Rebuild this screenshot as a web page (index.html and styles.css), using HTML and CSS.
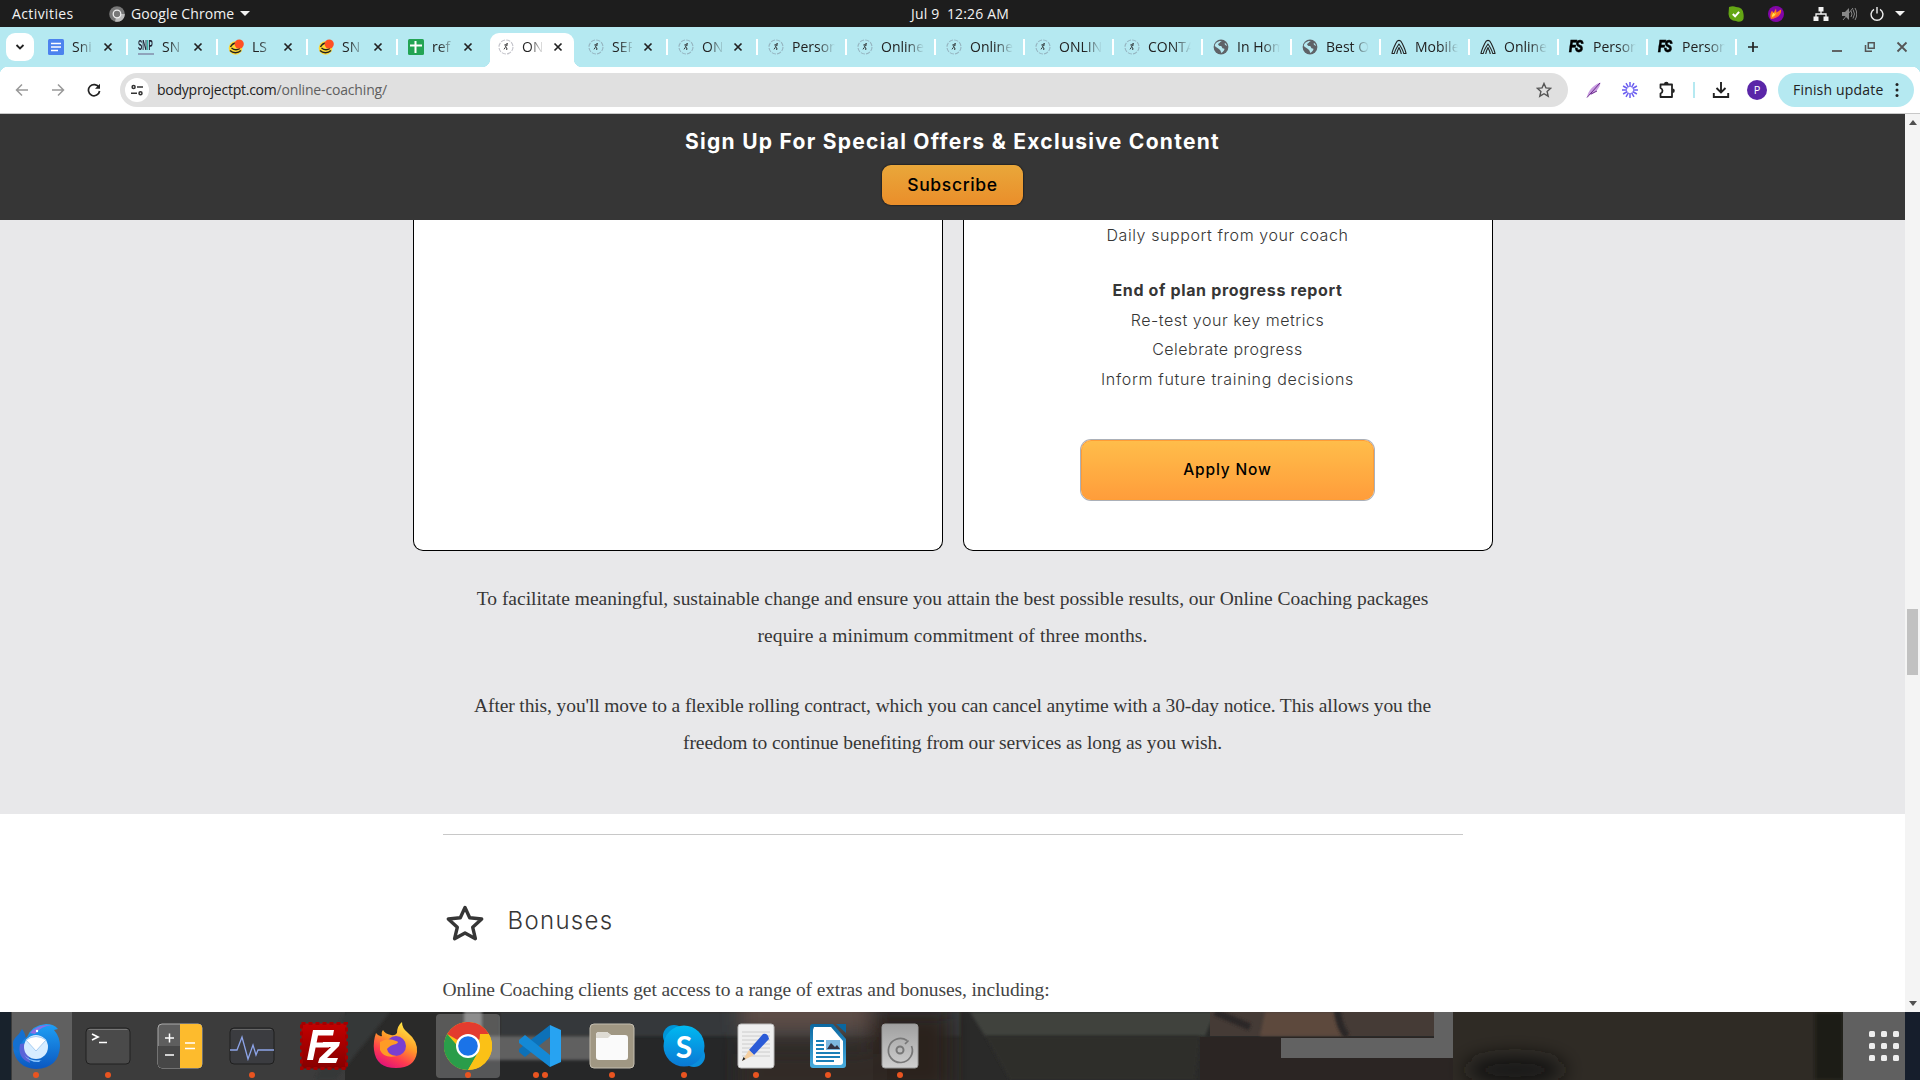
FILE: index.html
```html
<!DOCTYPE html>
<html lang="en">
<head>
<meta charset="utf-8">
<title>Online Coaching</title>
<link rel="stylesheet" href="styles.css">
</head>
<body>
<svg class="defs" width="0" height="0">
  <defs>
    <symbol id="close" viewBox="0 0 10 10"><path d="M1.500 1.500l7 7M8.500 1.500l-7 7" stroke="#222" stroke-width="1.700" fill="none"/></symbol>
    <symbol id="runner" viewBox="0 0 16 16"><circle cx="8" cy="8" r="7" fill="none" stroke="#667" stroke-opacity=".4" stroke-width="1.100" stroke-dasharray="4.300 1.200"/><path d="M6.300 6l2-.3 1 1.200M8.300 5.800L7.600 8l1.300 1-.2 2M7.400 8.300L6 10.300" stroke="#222" stroke-width=".9" fill="none"/><circle cx="9.100" cy="4.900" r=".8" fill="#222"/></symbol>
    <symbol id="globe" viewBox="0 0 16 16"><circle cx="8" cy="8" r="7.400" fill="#5f6368"/><path d="M9 2c-2 .5-2 2-3.300 2.500C4.500 5 5.500 7 7.500 7c2 0 1 2.500 3 2.500S11 12 8.500 14c-.8-1-.5-2-1.500-3S3 8 1.800 7C2 4 5 1.500 9 2zM12 4c-1 1 0 2 2 3-.2-1.500-1-2.500-2-3z" fill="#b5e9f1"/></symbol>
    <symbol id="arch" viewBox="0 0 16 16"><path d="M1 14.500C1.500 11 3.300 7.500 5 4 6.500.5 9.500.5 11 4c1.700 3.500 3.500 7 4 10.500h-2.300C12 11 10 8 8 5 6 8 4 11 3.300 14.500zM5.700 15c.2-2.500 1-4 2.300-6.500 1.300 2.500 2.100 4 2.300 6.500" stroke="#222" stroke-width="1.100" fill="none" stroke-linejoin="round"/></symbol>
    <symbol id="snap" viewBox="0 0 16 16"><circle cx="7.500" cy="9" r="6.800" fill="#fdd835"/><path d="M2.500 8c1.500-3 3-4 6-4M2 11.500c3 3 8 3 11 0M3.500 9c2.500 2 6 2 8.500.5" stroke="#222" stroke-width="1.400" fill="none"/><circle cx="11.200" cy="5" r="4.600" fill="#ff5023"/></symbol>
    <linearGradient id="gb" x1="0" y1="0" x2="0" y2="1"><stop offset="0" stop-color="#1ea0f5"/><stop offset="1" stop-color="#0b57c0"/></linearGradient>
    <linearGradient id="gf" x1=".8" y1="0" x2=".3" y2="1"><stop offset="0" stop-color="#fff34a"/><stop offset=".45" stop-color="#ff9a28"/><stop offset=".75" stop-color="#ff3b4f"/><stop offset="1" stop-color="#e0127a"/></linearGradient>
    <linearGradient id="gs" x1="0" y1="0" x2="0" y2="1"><stop offset="0" stop-color="#00b9f1"/><stop offset="1" stop-color="#0a78d4"/></linearGradient>
    <linearGradient id="gr" x1="0" y1="0" x2="0" y2="1"><stop offset="0" stop-color="#c40000"/><stop offset="1" stop-color="#860000"/></linearGradient>
    <linearGradient id="gd" x1="0" y1="0" x2="0" y2="1"><stop offset="0" stop-color="#a0a0a0"/><stop offset="1" stop-color="#cfcfcf"/></linearGradient>
    <linearGradient id="gw" x1="0" y1="0" x2="0" y2="1"><stop offset="0" stop-color="#0a67a0"/><stop offset="1" stop-color="#49aee0"/></linearGradient>
    <filter id="b2"><feGaussianBlur stdDeviation="1.500"/></filter>
    <filter id="b12" x="-100%" y="-200%" width="300%" height="500%"><feGaussianBlur stdDeviation="10"/></filter>
  </defs>
</svg>

<header class="topbar">
  <div class="topleft">
    <span class="t act">Activities</span>
    <svg class="chromeapp" width="16" height="16" viewBox="0 0 16 16"><circle cx="8" cy="8" r="7.800" fill="#777"/><path d="M8 8h7.800A7.800 7.800 0 0 1 6 15.500z" fill="#bbb"/><circle cx="8" cy="8" r="3.800" fill="#777" stroke="#eee" stroke-width="1.300"/></svg>
    <span class="t gc">Google Chrome</span>
    <i class="caret"></i>
  </div>
  <span class="t clock">Jul 9&nbsp; 12:26 AM</span>
  <div class="tray">
    <svg width="16" height="16" viewBox="0 0 16 16"><path d="M1 1q4-1.500 7 0 7 0 7.500 7 1 7-3 7.500-3 .5-4.500-.500Q1 15 .5 8z" fill="#64a614"/><path d="M4.800 8l2.300 2.300 4-4.500" stroke="#fff" stroke-width="2" fill="none"/></svg>
    <svg class="purple" width="16" height="16" viewBox="0 0 16 16"><circle cx="8" cy="8" r="8" fill="#8205a8"/><path d="M3 13C1.500 10 2.500 7 4 4.500L5.500 7 8 2.500l.5 4 4.500-3C14 9 9 12 3 13z" fill="#ff7a1a"/><path d="M7 11c2-1 4-3 5-6-1 5-4 7-8 8z" fill="#ff2a6a"/><path d="M4 11c-.500-2 1-3 1.500-4.500L6.500 8 7.500 6.500c.5 2-1 4-3.500 4.500z" fill="#ffe14a"/></svg>
    <svg width="16" height="14" viewBox="0 0 16 14"><path d="M5.500 0h5v4.500h-5zM.5 9.500h5V14h-5zM10.500 9.500h5V14h-5z" fill="#f2f2f2"/><path d="M8 4v3M3 10V7h10v3" stroke="#f2f2f2" stroke-width="1.300" fill="none"/></svg>
    <svg class="vol" width="16" height="14" viewBox="0 0 16 14"><path d="M1 5h3l4-4v12L4 9H1z" fill="#888"/><path d="M10 4q2 3 0 6M12 2.500q3 4.500 0 9M14 1q3.500 6 0 12M2 13L12 1" stroke="#888" fill="none"/></svg>
    <svg class="pow" width="14" height="14" viewBox="0 0 14 14"><path d="M4 2.300a5.900 5.900 0 1 0 6 0M7 0v6.500" stroke="#eee" stroke-width="1.400" fill="none"/></svg>
    <i class="caret"></i>
  </div>
</header>

<nav class="tabs">
  <div class="tabsearch"><svg width="10" height="8" viewBox="0 0 10 8"><path d="M1.500 2l3.500 3.500L8.500 2" stroke="#222" stroke-width="1.800" fill="none"/></svg></div>
  <div class="tab"><svg class="fav" viewBox="0 0 16 16"><rect width="16" height="16" rx="1.500" fill="#4c82ee"/><path d="M3 4.500h10M3 8h10M3 11.500h7" stroke="#fff" stroke-width="1.500"/></svg><span class="tt">Sni</span><svg class="x"><use href="#close"/></svg></div>
  <div class="tab"><span class="fav snp"><b>SN<em>I</em>P</b><i></i></span><span class="tt">SN</span><svg class="x"><use href="#close"/></svg></div>
  <div class="tab"><svg class="fav"><use href="#snap"/></svg><span class="tt">LS</span><svg class="x"><use href="#close"/></svg></div>
  <div class="tab"><svg class="fav"><use href="#snap"/></svg><span class="tt">SN</span><svg class="x"><use href="#close"/></svg></div>
  <div class="tab nosep"><svg class="fav" viewBox="0 0 16 16"><rect width="16" height="16" rx="1.500" fill="#23a454"/><path d="M2 6.500h12M7.500 2v12" stroke="#fff" stroke-width="2"/></svg><span class="tt">ref</span><svg class="x"><use href="#close"/></svg></div>
  <div class="tab active"><svg class="fav"><use href="#runner"/></svg><span class="tt">ON</span><svg class="x"><use href="#close"/></svg></div>
  <div class="tab"><svg class="fav"><use href="#runner"/></svg><span class="tt">SER</span><svg class="x"><use href="#close"/></svg></div>
  <div class="tab"><svg class="fav"><use href="#runner"/></svg><span class="tt">ON</span><svg class="x"><use href="#close"/></svg></div>
  <div class="tab wide"><svg class="fav"><use href="#runner"/></svg><span class="tt">Person</span></div>
  <div class="tab wide"><svg class="fav"><use href="#runner"/></svg><span class="tt">Online</span></div>
  <div class="tab wide"><svg class="fav"><use href="#runner"/></svg><span class="tt">Online</span></div>
  <div class="tab wide"><svg class="fav"><use href="#runner"/></svg><span class="tt">ONLIN</span></div>
  <div class="tab wide"><svg class="fav"><use href="#runner"/></svg><span class="tt">CONTA</span></div>
  <div class="tab wide"><svg class="fav"><use href="#globe"/></svg><span class="tt">In Hom</span></div>
  <div class="tab wide"><svg class="fav"><use href="#globe"/></svg><span class="tt">Best O</span></div>
  <div class="tab wide"><svg class="fav"><use href="#arch"/></svg><span class="tt">Mobile</span></div>
  <div class="tab wide"><svg class="fav"><use href="#arch"/></svg><span class="tt">Online</span></div>
  <div class="tab wide"><span class="fav fs">FS</span><span class="tt">Person</span></div>
  <div class="tab wide"><span class="fav fs">FS</span><span class="tt">Person</span></div>
  <svg class="plus" width="12" height="12" viewBox="0 0 12 12"><path d="M6 1v10M1 6h10" stroke="#222" stroke-width="1.700"/></svg>
  <div class="winctl">
    <svg width="12" height="12" viewBox="0 0 12 12"><path d="M1 10h10" stroke="#555" stroke-width="1.800"/></svg>
    <svg width="12" height="12" viewBox="0 0 12 12"><path d="M4.300 1.800h5.900v5.400H4.300zM1.500 4v6.200H8" stroke="#555" stroke-width="1.500" fill="none"/></svg>
    <svg width="12" height="12" viewBox="0 0 12 12"><path d="M1.500 1.500l9 9M10.500 1.500l-9 9" stroke="#555" stroke-width="1.800"/></svg>
  </div>
</nav>

<div class="toolbar">
  <svg class="nav" viewBox="0 0 14 14"><path d="M13 7H1.500M7 1.500L1.500 7 7 12.500" stroke="#999" stroke-width="1.500" fill="none"/></svg>
  <svg class="nav" viewBox="0 0 14 14"><path d="M1 7h11.500M7 1.500L12.500 7 7 12.500" stroke="#999" stroke-width="1.500" fill="none"/></svg>
  <svg class="nav" viewBox="0 0 14 14"><path d="M12 4.500A5.600 5.600 0 1 0 12.600 8" stroke="#222" stroke-width="1.700" fill="none"/><path d="M13 .8v5H8z" fill="#222"/></svg>
  <div class="omni">
    <div class="site"><svg width="12" height="12" viewBox="0 0 12 12"><g stroke="#333" stroke-width="1.500" fill="none"><circle cx="2.600" cy="3" r="1.500"/><path d="M6 3h6M0 9.200h6"/><circle cx="9.500" cy="9.200" r="1.500"/></g></svg></div>
    <span class="url"><span class="t dom">bodyprojectpt.com</span><span class="t path">/online-coaching/</span></span>
    <svg class="bstar" width="16" height="16" viewBox="0 0 16 16"><path d="M8 1.500l1.900 4.400 4.800.4-3.600 3.200 1.100 4.700L8 11.700l-4.200 2.500 1.100-4.700L1.300 6.300l4.800-.4z" stroke="#555" stroke-width="1.400" fill="none"/></svg>
  </div>
  <div class="exts">
    <svg width="16" height="16" viewBox="0 0 16 16"><path d="M1 15.500C2 9 7 3 14.500.5 14 6 9 12 3 13z" fill="#c79be0"/><path d="M1 15.500L14 1M5 12l6-3" stroke="#6a2a8a" stroke-width="1"/></svg>
    <svg width="16" height="16" viewBox="-8 -8 16 16"><g stroke="#6c5ff0" stroke-width="1.500"><path d="M0-8v5M0 8V3M-8 0h5M8 0H3M-4-6.900l2.500 4.300M4 6.900L1.500 2.600M4-6.900L1.500-2.600M-4 6.900l2.500-4.300M-6.900-4l4.300 2.500M6.900 4L2.600 1.500M-6.900 4l4.300-2.500M6.900-4L2.600-1.500"/></g></svg>
    <svg width="18" height="18" viewBox="0 0 18 18"><path d="M2.500 3.500H14v12.500H2.500v-3.500q2-.7 2-2.700T2.500 7z" stroke="#222" stroke-width="1.800" fill="none" stroke-linejoin="round"/><path d="M6 3a2.300 2.300 0 0 1 4.600 0zM14.500 7.500a2.300 2.300 0 0 1 0 4.600z" fill="#222"/></svg>
    <i class="vsep"></i>
    <svg width="18" height="18" viewBox="0 0 18 18"><path d="M9 1v10M4.500 7L9 11.500 13.500 7M1.800 12v4h14.400v-4" stroke="#222" stroke-width="1.900" fill="none"/></svg>
    <span class="avatar">P</span>
  </div>
  <div class="update"><span class="t fu">Finish update</span><svg width="4" height="16" viewBox="0 0 4 16"><g fill="#222"><circle cx="2" cy="2.500" r="1.500"/><circle cx="2" cy="8" r="1.500"/><circle cx="2" cy="13.500" r="1.500"/></g></svg></div>
</div>

<div class="viewport">
<main class="page">
  <section class="banner">
    <h2><span class="t h">Sign Up For Special Offers &amp; Exclusive Content</span></h2>
    <a class="sub"><span class="t sb">Subscribe</span></a>
  </section>
  <section class="plans">
    <div class="cards">
      <div class="card"></div>
      <div class="card">
        <p><span class="t c1">Daily support from your coach</span></p>
        <p class="gap"><b class="t c2">End of plan progress report</b></p>
        <p><span class="t c3">Re-test your key metrics</span></p>
        <p><span class="t c4">Celebrate progress</span></p>
        <p><span class="t c5">Inform future training decisions</span></p>
        <a class="apply"><span class="t ap">Apply Now</span></a>
      </div>
    </div>
    <div class="terms">
      <p><span class="t p1">To facilitate meaningful, sustainable change and ensure you attain the best possible results, our Online Coaching packages</span><br><span class="t p2">require a minimum commitment of three months.</span></p>
      <p><span class="t p3">After this, you'll move to a flexible rolling contract, which you can cancel anytime with a 30-day notice. This allows you the</span><br><span class="t p4">freedom to continue benefiting from our services as long as you wish.</span></p>
    </div>
  </section>
  <section class="bonus">
    <div class="rule"></div>
    <h3><svg width="40" height="38" viewBox="0 0 40 38"><path d="M20 3.500l4.700 10.300 12 1.200-9 8.300 2.700 11.400L20 29l-10.400 5.700L12.300 23.300 3.300 15l12-1.200z" fill="none" stroke="#363636" stroke-width="3.400" stroke-linejoin="round"/></svg><span class="t bn">Bonuses</span></h3>
    <p><span class="t p5">Online Coaching clients get access to a range of extras and bonuses, including:</span></p>
  </section>
</main>
<aside class="scroll"><i class="up"></i><i class="thumb"></i><i class="down"></i></aside>
</div>

<footer class="dock">
  <svg class="wall" width="1920" height="68" viewBox="0 0 1920 68">
    <rect width="1920" height="68" fill="#2a2a29"/>
    <rect x="440" y="24" width="300" height="44" fill="#262728"/>
    <rect width="345" height="68" fill="#3c3c3c"/><path d="M345 0h45L335 68h-20z" fill="#363737" filter="url(#b2)"/>
    <rect width="11" height="68" fill="#18222c"/><rect x="12" width="60" height="68" fill="#606060"/>
    <rect x="500" width="460" height="24" fill="#36383a" filter="url(#b2)"/>
    <g filter="url(#b12)"><rect x="740" y="-14" width="130" height="34" fill="#5e4d46"/><rect x="870" y="0" width="80" height="80" fill="#2c201e"/><rect x="740" y="36" width="140" height="50" fill="#332a27"/></g>
    <path d="M970 0h245l-10 24H985z" fill="#41433e" filter="url(#b2)"/>
    <path d="M985 24h215l-5 44H1010z" fill="#2d2d2c" filter="url(#b2)"/>
    <rect x="1210" width="224" height="24" fill="#453b36"/><path d="M1265 0h70l10 24h-85z" fill="#5d4a3d" filter="url(#b2)"/><path d="M1215 0l35 15M1337-4q2 20 10 28" stroke="#292727" stroke-width="7" fill="none" filter="url(#b2)"/>
    <rect x="1200" y="25" width="280" height="43" fill="#2b2523"/>
    <rect x="1453" width="380" height="68" fill="#2f2b25"/><ellipse cx="1515" cy="58" rx="50" ry="14" fill="#191817" filter="url(#b12)"/>
    <path d="M1434 0h19v46h-172V26h153z" fill="#626262"/>
    <rect x="476" y="24" width="150" height="24" fill="#606061" filter="url(#b2)"/><rect x="464" y="-5" width="18" height="50" fill="#777" filter="url(#b2)"/>
    <rect x="1815" width="28" height="68" fill="#1b1a19" filter="url(#b2)"/><rect x="1843" width="62" height="68" fill="#606060"/><rect x="1905" width="15" height="68" fill="#161e2c"/>
  </svg>
  <div class="apps">
    <div class="app r1"><svg viewBox="0 0 48 48"><path d="M10 7q4 5 4 12L5 34Q-2 22 3 16q4-3 7-9z" fill="#1470d0"/><path d="M15 15Q20 3 34 2q8 0 12 5l-4 1q6 7 6 16-1 22-24 23Q4 46 1 26q2 3 6 3 1-9 8-14z" fill="url(#gb)"/><path d="M18 11q7-9 22-8-11 1-17 9z" fill="#8c70e4"/><path d="M8 22q-3 14 10 19l-3-20z" fill="#5a64d8"/><circle cx="25" cy="9" r="1.200" fill="#fff"/><circle cx="24" cy="25" r="12" fill="#d6ecff"/><path d="M14 18q10-7 20 0L24 29z" fill="#fff" stroke="#a8cdf2"/><path d="M12 33q6 7 18 5-4 1-2 2-10 1-16-7z" fill="#8cc8ff"/></svg></div>
    <div class="app r1"><svg viewBox="0 0 48 48"><rect x="2" y="6" width="44" height="36" rx="4" fill="#4a4a4a" stroke="#202020"/><path d="M4.500 7.500h39" stroke="#777"/><path d="M8 12l6 3-6 3M15 20.500h8" stroke="#fff" stroke-width="1.700" fill="none"/></svg></div>
    <div class="app"><svg viewBox="0 0 48 48"><rect x="2" y="2" width="44" height="44" rx="4" fill="#5e5e5e" stroke="#aaa"/><path d="M2 24h22v22H6q-4 0-4-4z" fill="#474747"/><path d="M24 2h18q4 0 4 4v36q0 4-4 4H24z" fill="#fdbb2d"/><path d="M9 16h9M13.500 11.500v9M9 33h9M29 21h10M29 26.500h10" stroke="#fff" stroke-width="1.500"/></svg></div>
    <div class="app r1"><svg viewBox="0 0 48 48"><rect x="2" y="6" width="44" height="36" rx="4" fill="#3b3c40" stroke="#1f1f1f"/><path d="M4.500 7.500h39" stroke="#666"/><path d="M2 28h7l5-13 6 22 5-14 3 10 2-5h16" stroke="#8da4e8" stroke-width="1.300" fill="none"/></svg></div>
    <div class="app"><svg viewBox="0 0 48 48"><rect x="1.500" y="1.500" width="45" height="45" fill="url(#gr)" stroke="#a30000" stroke-width="3" stroke-dasharray="4 3"/><path d="M7 38L13 8h21l-1 5.500H18l-1.400 7H30l-1 5H15.600L13 38z" fill="#fff"/><path d="M23 20h17l-1 4-12 12h11l-2 5H18l1.500-5L31 25h-9z" fill="#fff"/></svg></div>
    <div class="app"><svg viewBox="0 0 48 48"><path d="M4 11q3 4 6 3-1-4 1-6 2 4 8 5 4 1 6-2 0-7 5-11 0 6 5 10 11 9 10 20-2 16-21 16Q4 46 2 28q-1-9 2-17z" fill="url(#gf)"/><circle cx="24" cy="24" r="10" fill="#7a3fd0"/><path d="M8 20q8-5 16-1 4 1 0 3-6 1-9 5 1 7 10 7-13 3-17-6z" fill="#ff9b25"/></svg></div>
    <div class="app r1 on"><svg viewBox="0 0 48 48"><circle cx="24" cy="24" r="24" fill="#fbc116"/><path d="M24 24L3.200 12A24 24 0 0 1 44.800 12z" fill="#e33b2e"/><path d="M3.200 12A24 24 0 0 0 24 48l10.400-18-10.400 6z" fill="#2a9d4a"/><path d="M24 48l10.400-18L36 12h8.800A24 24 0 0 1 24 48z" fill="#fbc116"/><circle cx="24" cy="24" r="12" fill="#fff"/><circle cx="24" cy="24" r="9.800" fill="#1a73e8"/></svg></div>
    <div class="app r2"><svg viewBox="0 0 48 48"><path d="M34 3l11 5v32l-11 5z" fill="#27a3f2"/><path d="M34 3v12L9 35l-6-5v-3z" fill="#0d71b8"/><path d="M34 45V33L9 13l-6 5v3z" fill="#1489d6"/></svg></div>
    <div class="app r1"><svg viewBox="0 0 48 48"><rect x="2" y="2" width="44" height="44" rx="4" fill="#a09783" stroke="#c4beb0"/><path d="M8 13q0-3 3-3h8l4 3h14q3 0 3 3v19q0 3-3 3H11q-3 0-3-3z" fill="#fafafa"/><path d="M8 14q0-4 3-4h8l4 3-3 3H8z" fill="#dedbd3"/></svg></div>
    <div class="app r1"><svg viewBox="0 0 48 48"><circle cx="14" cy="14" r="11" fill="#0095d8"/><circle cx="34" cy="34" r="11" fill="#0a8fdc"/><circle cx="24" cy="24" r="20.500" fill="url(#gs)"/></svg><b class="sk">S</b></div>
    <div class="app r1"><svg viewBox="0 0 48 48"><rect x="6" y="2" width="36" height="44" rx="3" fill="#efefef" stroke="#bbb"/><path d="M10 10h28M10 14h28M10 18h28M10 22h28M10 26h28M10 30h28M10 34h28" stroke="#ccc"/><path d="M31 12q5-1 6 5L22 33l-5-5z" fill="#2b5bd7"/><path d="M17 28l5 5-12 6z" fill="#f5cfa0"/><path d="M11.500 35l2 2-3.500 2z" fill="#222"/></svg></div>
    <div class="app r1"><svg viewBox="0 0 48 48"><path d="M9 2h20l13 15v26q0 3-3 3H9q-3 0-3-3V5q0-3 3-3z" fill="url(#gw)"/><path d="M10 5h17l12 14v21q0 3-3 3H12q-3 0-3-3V8z" fill="#fff"/><path d="M32 2h10v9z" fill="#0a67a0"/><path d="M12 19h8M12 23h8M12 27h8M12 31h24M12 35h24M12 39h18" stroke="#1a7fb8" stroke-width="2"/><path d="M22 18h14v10H22z" fill="#7db8e0"/><path d="M23 27l4-6 4 4 2-2 3 4z" fill="#334"/></svg></div>
    <div class="app r1"><svg viewBox="0 0 48 48"><rect x="6" y="2" width="36" height="44" rx="3" fill="url(#gd)" stroke="#999"/><circle cx="24" cy="28" r="3.500" stroke="#777" stroke-width="2" fill="none"/><path d="M31 18.500A12 12 0 1 0 35.500 24M29 22l3.500-3.500" stroke="#777" stroke-width="1.700" fill="none"/></svg></div>
  </div>
  <div class="grid9"><i></i><i></i><i></i><i></i><i></i><i></i><i></i><i></i><i></i></div>
</footer>
</body>
</html>
```
FILE: styles.css
```css
* { box-sizing: border-box; }
body { margin: 0; width: 1920px; height: 1080px; overflow: hidden; display: flex; flex-direction: column; font-family: "Open Sans", sans-serif; font-size: 14px; color: #222; background: #fff; }
svg { display: block; flex: none; }
.defs { position: absolute; }
.t { white-space: nowrap; display: inline-block; }
p, h2, h3 { margin: 0; font-weight: 400; }

.topbar { height: 27px; background: #1d1d1d; color: #f2f2f2; display: grid; grid-template-columns: 1fr auto 1fr; align-items: center; flex: none; }
.topleft { display: flex; align-items: center; padding-left: 12px; }
.chromeapp { margin: 0 6px 0 35px; }
.act { width: 62px; letter-spacing: .4px; }
.gc { width: 104px; letter-spacing: .1px; }
.clock { letter-spacing: .16px; }
.caret { border: 5px solid transparent; border-top: 5.500px solid #f2f2f2; border-bottom: 0; margin-left: 5px; }
.tray { display: flex; justify-content: flex-end; align-items: center; padding-right: 15px; }
.purple { margin: 0 28.500px 0 24px; }
.vol { margin-left: 12.500px; }
.pow { margin: 0 11.500px 0 12.500px; }
.tray .caret { margin-left: 0; }

.tabs { height: 40px; background: #b5e9f1; display: flex; align-items: center; flex: none; }
.tabsearch { width: 28px; height: 28px; border-radius: 9px; background: #fff; margin: 0 4px 0 6px; display: grid; place-items: center; }
.tab { width: 90px; height: 28px; padding: 0 0 0 10px; display: flex; align-items: center; position: relative; flex: none; }
.tab.wide { width: 89px; }
.tab::after { content: ""; position: absolute; right: 0; top: 6px; width: 2px; height: 16px; background: #fff; }
.tab.nosep::after { display: none; }
.fav { width: 16px; height: 16px; flex: none; }
.tt { margin-left: 8px; width: 20px; white-space: nowrap; font-size: 14px; line-height: 20px; -webkit-mask-image: linear-gradient(90deg, #000 35%, rgba(0,0,0,.15) 100%); mask-image: linear-gradient(90deg, #000 35%, rgba(0,0,0,.15) 100%); }
.wide .tt { width: 43px; -webkit-mask-image: linear-gradient(90deg, #000 60%, transparent 100%); mask-image: linear-gradient(90deg, #000 60%, transparent 100%); }
.x { width: 10px; height: 10px; margin-left: 11px; }
.active::before { content: ""; position: absolute; left: 2px; right: 4px; top: 0; height: 34px; background: #fff; border-radius: 9px 9px 0 0; }
.tab.active::after { left: -6px; right: -4px; width: auto; top: 26px; height: 8px; background: radial-gradient(circle at 0 0, transparent 8px, #fff 8.500px) left / 8px 8px no-repeat, radial-gradient(circle at 100% 0, transparent 8px, #fff 8.500px) right / 8px 8px no-repeat; }
.active > * { position: relative; }
.snp { display: flex; flex-direction: column; justify-content: space-between; }
.snp b { font: 700 12px/12px "Liberation Sans", sans-serif; transform: scale(.53, 1.25); transform-origin: left; color: #223; white-space: nowrap; }
.snp em { color: #2a9; font-style: normal; }
.snp i { height: 2px; background: #779; opacity: .6; }
.fs { font: italic 900 16px/16px "Roboto", sans-serif; letter-spacing: -1.500px; color: #000; -webkit-text-stroke: .4px #000; transform: scaleX(.85); transform-origin: left; }
.plus { margin-left: 10px; }
.winctl { display: flex; gap: 20.500px; margin-left: auto; padding-right: 12px; }

.toolbar { height: 47px; display: flex; align-items: center; padding: 0 6px 1px 15px; border-bottom: 1px solid #c8c8c8; background: #fff; flex: none; position: relative; }
.toolbar::before { content: ""; position: absolute; inset: 0 0 auto 0; height: 8px; background: radial-gradient(circle at 100% 100%, transparent 8px, #b5e9f1 8.500px) left / 8px 8px no-repeat, radial-gradient(circle at 0 100%, transparent 8px, #b5e9f1 8.500px) right / 8px 8px no-repeat; }
.nav { width: 14px; height: 14px; margin-right: 22px; }
.nav:nth-of-type(3) { margin-right: 19px; }
.omni { width: 1448px; height: 34px; border-radius: 17px; background: #e0e0e0; display: flex; align-items: center; padding: 0 16px 0 5px; }
.site { width: 24px; height: 24px; border-radius: 50%; background: #fff; display: grid; place-items: center; margin-right: 8px; }
.url { display: flex; }
.dom { letter-spacing: -.247px; }
.path { color: #5f5f5f; letter-spacing: -.16px; }
.bstar { margin-left: auto; }
.exts { display: flex; align-items: center; margin-left: 18px; gap: 20px; }
.vsep { width: 2px; height: 16px; background: #b5e9f1; margin: 0 -3px 0 -3px; }
.avatar { width: 20px; height: 20px; border-radius: 50%; background: #5a26a8; color: #fff; font-size: 11px; line-height: 20px; text-align: center; margin-left: -3px; }
.update { margin-left: auto; width: 136px; height: 34px; border-radius: 17px; background: #b5e9f1; display: flex; align-items: center; justify-content: space-between; padding: 0 15px; }
.fu { letter-spacing: .183px; }

.viewport { height: 898px; display: flex; flex: none; overflow: hidden; }
.page { width: 1905px; font-family: Inter, sans-serif; color: #363636; }
.banner { height: 106px; background: #363636; display: flex; flex-direction: column; align-items: center; padding-top: 13px; }
.h { font-weight: 700; font-size: 21px; line-height: 30px; color: #fff; letter-spacing: 1.275px; }
.sub { margin-top: 8px; width: 141px; height: 40px; border-radius: 9px; background: linear-gradient(#e9a73a, #ea8e2a); box-shadow: 0 0 2px #000; display: grid; place-items: center; color: #000; font-size: 17.500px; font-weight: 500; padding-bottom: 2px; }
.sb { letter-spacing: .648px; }
.plans { height: 594px; background: #e8e8ea; }
.cards { display: grid; grid-template-columns: 530px 530px; gap: 20px; justify-content: center; height: 331px; }
.card { background: #fff; border: 1px solid #000; border-top: 0; border-radius: 0 0 10px 10px; text-align: center; font-size: 16px; line-height: 29.600px; display: flex; flex-direction: column; align-items: center; padding-top: 1px; }
.card p { font-weight: 300; }
.card b { font-weight: 700; letter-spacing: .639px; }
.c1 { letter-spacing: .574px; }
.c3 { letter-spacing: .523px; }
.c4 { letter-spacing: .47px; }
.c5 { letter-spacing: .673px; }
.gap { margin-top: 25.500px; }
.apply { margin-top: 45.500px; width: 293px; height: 60px; border-radius: 10px; border: 1px solid #ff9d35; box-shadow: 0 0 0 1px #abb0b8; background: linear-gradient(#ffbd4a, #ff9d3b); display: grid; place-items: center; color: #000; font-weight: 500; font-size: 15.500px; }
.ap { letter-spacing: .845px; }
.terms { font: 19.500px/37px "Liberation Serif", serif; text-align: center; padding-top: 29px; }
.terms p + p { margin-top: 33px; }
.p1 { letter-spacing: -.02px; }
.p2 { letter-spacing: .11px; }
.p3 { letter-spacing: -.115px; }
.p4 { letter-spacing: -.085px; }
.bonus { padding: 20px 442px 0 442.500px; }
.rule { height: 1px; background: #c8c8c8; }
h3 { display: flex; padding-top: 68px; height: 128px; font-size: 24px; font-weight: 300; }
h3 svg { margin: 1px 23px 0 2px; }
h3 .t { line-height: 36px; letter-spacing: 1.321px; }
.bonus p { font: 19.500px/37px "Liberation Serif", serif; color: #444; padding-top: 8px; }
.p5 { letter-spacing: -.11px; }

.scroll { width: 15px; background: #f4f4f4; display: flex; flex-direction: column; align-items: center; }
.up { border: 4px solid transparent; border-bottom: 5px solid #505050; border-top: 0; margin-top: 6px; }
.thumb { width: 11px; height: 66px; background: #c1c1c1; margin-top: 484px; }
.down { border: 4px solid transparent; border-top: 5px solid #505050; border-bottom: 0; margin: auto 0 6px; }

.dock { height: 68px; position: relative; display: flex; justify-content: space-between; flex: none; }
.wall { position: absolute; left: 0; top: 0; }
.apps { display: flex; }
.app { position: relative; width: 72px; height: 68px; display: flex; justify-content: center; padding-top: 10px; }
.app svg { width: 48px; height: 48px; position: relative; }
.on::before { content: ""; position: absolute; left: 4px; top: 2px; width: 64px; height: 64px; border-radius: 4px; background: rgba(190, 190, 190, .32); }
.r1::after, .r2::after { content: ""; position: absolute; left: 33px; top: 60px; width: 6px; height: 6px; border-radius: 50%; background: #e95420; }
.r2::after { left: 28.500px; box-shadow: 9px 0 #e95420; }
.sk { position: absolute; inset: 10px 0 auto; text-align: center; font: 700 30px/48px Lato, sans-serif; color: #fff; }
.grid9 { position: relative; display: grid; grid-template-columns: repeat(3, 6px); gap: 6px; align-content: center; padding-right: 21px; }
.grid9 i { height: 6px; background: #eee; border-radius: 1.500px; }
```
